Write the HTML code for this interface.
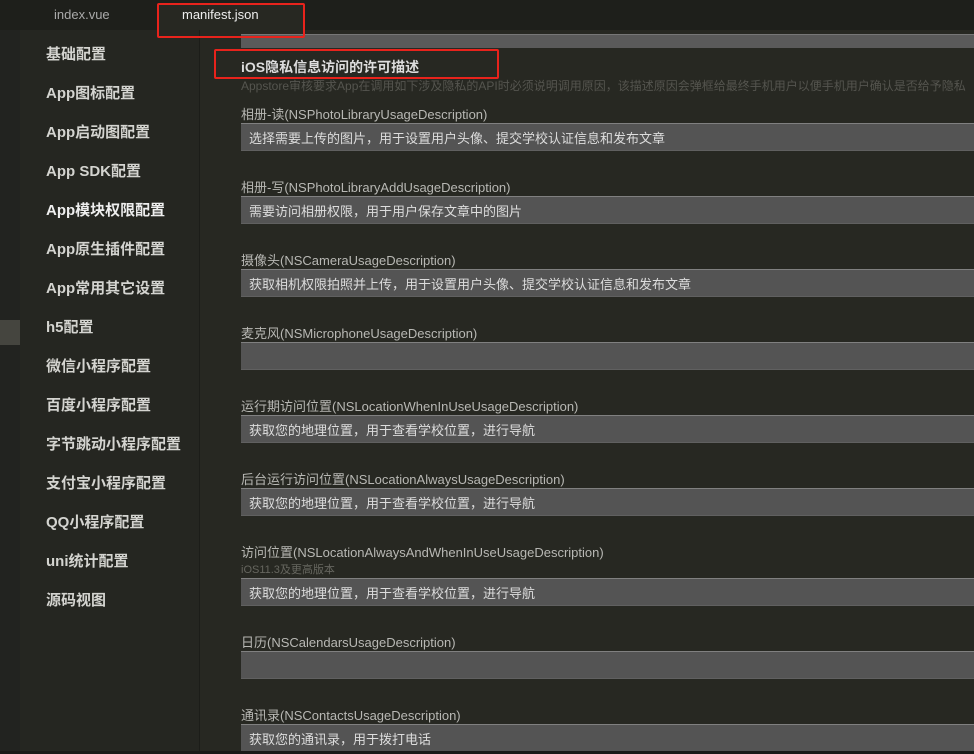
<!DOCTYPE html>
<html><head><meta charset="utf-8"><style>
*{margin:0;padding:0;box-sizing:border-box}
body{width:974px;height:754px;overflow:hidden;background:#272822;font-family:"Liberation Sans","Noto Sans CJK SC",sans-serif;position:relative;color:#ccc}
.abs{position:absolute}
.tabbar{left:0;top:0;width:974px;height:30px;background:#1e1f1b}
.strip{left:0;top:30px;width:20px;height:724px;background:#222320}
.side{left:20px;top:30px;width:180px;height:724px;background:#252621;border-right:1px solid #1c1d19}
.si{position:absolute;left:26px;font-size:15px;font-weight:bold;color:#d4d4d0;white-space:nowrap}
.lbl{position:absolute;left:241px;font-size:13px;color:#b8b8b4;white-space:nowrap}
.inp{position:absolute;left:241px;width:733px;height:28px;background:#545454;border-top:1px solid #808080;border-bottom:1px solid #606060;font-size:13px;color:#ddd;padding:4px 0 0 8px;white-space:nowrap}
.red{position:absolute;border:2px solid #e8231c;border-radius:2px}
</style></head><body>
<div class="abs tabbar"></div>
<div class="abs" style="left:54px;top:7px;font-size:13px;color:#aaa">index.vue</div>
<div class="abs" style="left:159px;top:5px;width:145px;height:30px;background:#272822"></div>
<div class="abs" style="left:182px;top:7px;font-size:13px;color:#eee">manifest.json</div>
<div class="abs strip"></div>
<div class="abs" style="left:0;top:320px;width:20px;height:25px;background:#45453f"></div>
<div class="abs side">
<div class="si" style="top:13px">基础配置</div>
<div class="si" style="top:52px">App图标配置</div>
<div class="si" style="top:91px">App启动图配置</div>
<div class="si" style="top:130px">App SDK配置</div>
<div class="si" style="top:169px;color:#eee">App模块权限配置</div>
<div class="si" style="top:208px">App原生插件配置</div>
<div class="si" style="top:247px">App常用其它设置</div>
<div class="si" style="top:286px">h5配置</div>
<div class="si" style="top:325px">微信小程序配置</div>
<div class="si" style="top:364px">百度小程序配置</div>
<div class="si" style="top:403px">字节跳动小程序配置</div>
<div class="si" style="top:442px">支付宝小程序配置</div>
<div class="si" style="top:481px">QQ小程序配置</div>
<div class="si" style="top:520px">uni统计配置</div>
<div class="si" style="top:559px">源码视图</div>
</div>
<div class="abs" style="left:241px;top:34px;width:733px;height:14px;background:#5a5a5a;border-top:1px solid #777"></div>
<div class="abs" style="left:241px;top:57px;font-size:14px;font-weight:bold;color:#ddd">iOS隐私信息访问的许可描述</div>
<div class="abs" style="left:241px;top:77px;font-size:12px;color:#55554f;white-space:nowrap">Appstore审核要求App在调用如下涉及隐私的API时必须说明调用原因，该描述原因会弹框给最终手机用户以便手机用户确认是否给予隐私</div>
<div class="lbl" style="top:104px">相册-读(NSPhotoLibraryUsageDescription)</div>
<div class="inp" style="top:123px">选择需要上传的图片，用于设置用户头像、提交学校认证信息和发布文章</div>
<div class="lbl" style="top:177px">相册-写(NSPhotoLibraryAddUsageDescription)</div>
<div class="inp" style="top:196px">需要访问相册权限，用于用户保存文章中的图片</div>
<div class="lbl" style="top:250px">摄像头(NSCameraUsageDescription)</div>
<div class="inp" style="top:269px">获取相机权限拍照并上传，用于设置用户头像、提交学校认证信息和发布文章</div>
<div class="lbl" style="top:323px">麦克风(NSMicrophoneUsageDescription)</div>
<div class="inp" style="top:342px"></div>
<div class="lbl" style="top:396px">运行期访问位置(NSLocationWhenInUseUsageDescription)</div>
<div class="inp" style="top:415px">获取您的地理位置，用于查看学校位置，进行导航</div>
<div class="lbl" style="top:469px">后台运行访问位置(NSLocationAlwaysUsageDescription)</div>
<div class="inp" style="top:488px">获取您的地理位置，用于查看学校位置，进行导航</div>
<div class="lbl" style="top:542px">访问位置(NSLocationAlwaysAndWhenInUseUsageDescription)</div>
<div class="abs" style="left:241px;top:561px;font-size:11px;color:#66665f">iOS11.3及更高版本</div>
<div class="inp" style="top:578px">获取您的地理位置，用于查看学校位置，进行导航</div>
<div class="lbl" style="top:632px">日历(NSCalendarsUsageDescription)</div>
<div class="inp" style="top:651px"></div>
<div class="lbl" style="top:705px">通讯录(NSContactsUsageDescription)</div>
<div class="inp" style="top:724px">获取您的通讯录，用于拨打电话</div>
<div class="abs" style="left:0;top:751px;width:974px;height:3px;background:#1a1a18"></div>
<div class="red" style="left:157px;top:3px;width:148px;height:35px"></div>
<div class="red" style="left:214px;top:49px;width:285px;height:30px"></div>
</body></html>
